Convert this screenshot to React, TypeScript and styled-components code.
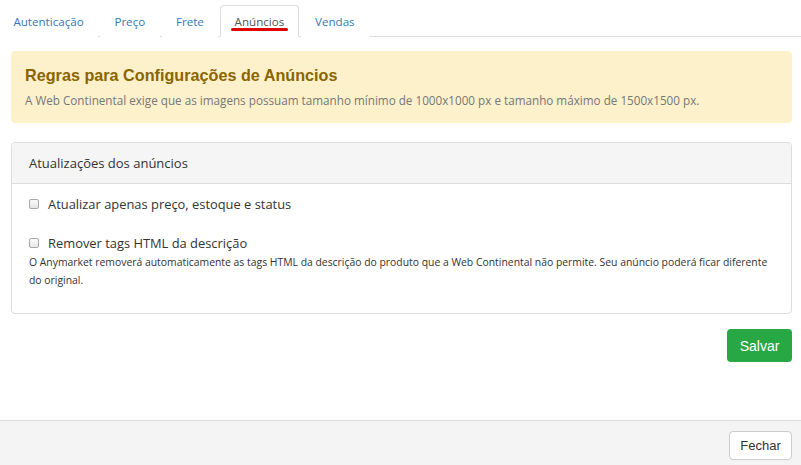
import React from "react";
import styled, { createGlobalStyle } from "styled-components";

const Global = createGlobalStyle`
  html, body { margin: 0; padding: 0; background: #fff; }
  body { font-family: "Open Sans", Arial, sans-serif; color: #333; }
  * { box-sizing: border-box; }
`;

const Page = styled.div`
  width: 801px;
  height: 465px;
  display: flex;
  flex-direction: column;
  overflow: hidden;
`;

const Body = styled.div`
  flex: 1;
  display: flex;
  flex-direction: column;
`;

const TabBar = styled.ul`
  list-style: none;
  margin: 5px 0 0 0;
  padding: 0;
  display: flex;
  border-bottom: 1px solid #ddd;
  height: 32px;
`;

const Tab = styled.li<{ $active?: boolean }>`
  margin-right: 2px;
  margin-bottom: -1px;
  padding: 0 13.4px;
  height: 32px;
  display: flex;
  align-items: center;
  font-size: 11.6px;
  color: ${(p) => (p.$active ? "#555" : "#337ab7")};
  border: 1px solid ${(p) => (p.$active ? "#ddd" : "transparent")};
  border-bottom-color: ${(p) => (p.$active ? "#fff" : "transparent")};
  border-radius: 4px 4px 0 0;
  background: #fff;
  position: relative;
  &:first-child { margin-left: -1px; }
`;

const Underline = styled.span`
  position: absolute;
  left: 10px;
  right: 10px;
  top: 22px;
  height: 3px;
  border-radius: 2px;
  background: #e00000;
`;

const Content = styled.div`
  padding: 14px 9px 0 11px;
  display: flex;
  flex-direction: column;
`;

const Alert = styled.div`
  background: #fdf1cb;
  border-radius: 4px;
  padding: 13px 14px 14px 14px;
  height: 72px;
`;

const AlertTitle = styled.h4`
  margin: 0;
  font-family: "Liberation Sans", Arial, sans-serif;
  font-weight: bold;
  font-size: 16.2px;
  line-height: 22px;
  color: #8a6500;
`;

const AlertText = styled.p`
  margin: 6px 0 0 0;
  font-size: 11.7px;
  line-height: 16px;
  color: #777;
`;

const Panel = styled.div`
  margin-top: 19px;
  border: 1px solid #ddd;
  border-radius: 4px;
  height: 172px;
`;

const PanelHeader = styled.div`
  background: #f5f5f5;
  border-bottom: 1px solid #ddd;
  height: 41px;
  padding: 0 17px;
  display: flex;
  align-items: center;
  font-size: 13px;
  color: #333;
  border-radius: 4px 4px 0 0;
`;

const PanelBody = styled.div`
  padding: 11px 17px 0 17px;
`;

const CheckRow = styled.label<{ $top?: number }>`
  display: flex;
  align-items: center;
  gap: 9px;
  margin-top: ${(p) => p.$top ?? 0}px;
  font-size: 12.9px;
  color: #333;
  height: 18px;
`;

const Box = styled.span`
  width: 10px;
  height: 10px;
  border: 1px solid #a8a8a8;
  border-radius: 2px;
  background: linear-gradient(#fafafa, #e6e6e6);
  flex: none;
`;

const Help = styled.p`
  margin: 1px 0 0 0;
  font-size: 10.4px;
  line-height: 18px;
  color: #333;
`;

const Actions = styled.div`
  display: flex;
  justify-content: flex-end;
  padding-top: 15px;
`;

const SaveButton = styled.button`
  width: 65px;
  height: 33px;
  border: none;
  border-radius: 4px;
  background: #28a745;
  color: #fff;
  font-family: "Liberation Sans", Arial, sans-serif;
  font-size: 14px;
  padding: 0;
`;

const Footer = styled.div`
  height: 45px;
  background: #f4f4f4;
  border-top: 1px solid #ddd;
  display: flex;
  justify-content: flex-end;
  align-items: center;
  padding: 0 9px 0 0;
`;

const CloseButton = styled.button`
  width: 63px;
  height: 29px;
  border: 1px solid #ccc;
  border-radius: 4px;
  background: #fff;
  color: #333;
  font-family: "Liberation Sans", Arial, sans-serif;
  font-size: 13px;
  padding: 0;
  margin-top: 4px;
`;

export default function App() {
  const tabs = ["Autenticação", "Preço", "Frete", "Anúncios", "Vendas"];
  return (
    <Page>
      <Global />
      <Body>
        <TabBar>
          {tabs.map((t) => (
            <Tab key={t} $active={t === "Anúncios"}>
              {t}
              {t === "Anúncios" && <Underline />}
            </Tab>
          ))}
        </TabBar>
        <Content>
          <Alert>
            <AlertTitle>Regras para Configurações de Anúncios</AlertTitle>
            <AlertText>
              A Web Continental exige que as imagens possuam tamanho mínimo de 1000x1000 px e tamanho máximo de 1500x1500 px.
            </AlertText>
          </Alert>
          <Panel>
            <PanelHeader>Atualizações dos anúncios</PanelHeader>
            <PanelBody>
              <CheckRow>
                <Box />
                Atualizar apenas preço, estoque e status
              </CheckRow>
              <CheckRow $top={21}>
                <Box />
                Remover tags HTML da descrição
              </CheckRow>
              <Help>
                O Anymarket removerá automaticamente as tags HTML da descrição do produto que a Web Continental não permite. Seu anúncio poderá ficar diferente do original.
              </Help>
            </PanelBody>
          </Panel>
          <Actions>
            <SaveButton>Salvar</SaveButton>
          </Actions>
        </Content>
      </Body>
      <Footer>
        <CloseButton>Fechar</CloseButton>
      </Footer>
    </Page>
  );
}
